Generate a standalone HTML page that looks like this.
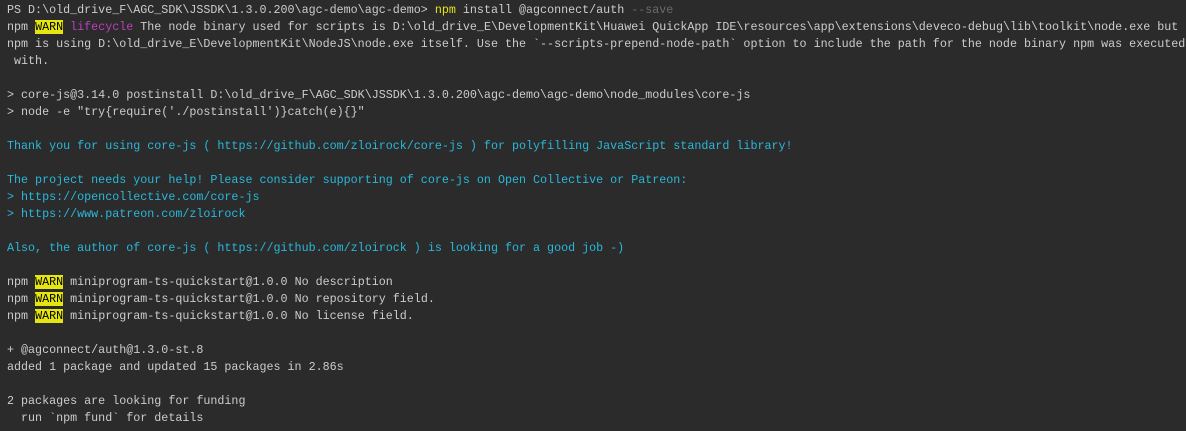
<!DOCTYPE html><html><head><style>
body{margin:0;background:#1e1e1e;}
.t{width:1186px;height:431px;background:#2b2b2b;color:#cccccc;font-family:"Liberation Mono",monospace;font-size:11.7px;line-height:17px;padding:2px 0 0 7px;box-sizing:border-box;white-space:pre;overflow:hidden;}
.c{color:#29b8db}.m{color:#bc3fbc}.y{color:#e5e510}.g{color:#6b6b6b}
.w{background:#e5e510;color:#000}
</style></head><body><div class="t">PS D:\old_drive_F\AGC_SDK\JSSDK\1.3.0.200\agc-demo\agc-demo&gt; <span class="y">npm</span> install @agconnect/auth <span class="g">--save</span>
npm <span class="w">WARN</span> <span class="m">lifecycle</span> The node binary used for scripts is D:\old_drive_E\DevelopmentKit\Huawei QuickApp IDE\resources\app\extensions\deveco-debug\lib\toolkit\node.exe but
npm is using D:\old_drive_E\DevelopmentKit\NodeJS\node.exe itself. Use the `--scripts-prepend-node-path` option to include the path for the node binary npm was executed
 with.

&gt; core-js@3.14.0 postinstall D:\old_drive_F\AGC_SDK\JSSDK\1.3.0.200\agc-demo\agc-demo\node_modules\core-js
&gt; node -e "try{require('./postinstall')}catch(e){}"

<span class="c">Thank you for using core-js ( https://github.com/zloirock/core-js ) for polyfilling JavaScript standard library!</span>

<span class="c">The project needs your help! Please consider supporting of core-js on Open Collective or Patreon:</span>
<span class="c">&gt; https://opencollective.com/core-js</span>
<span class="c">&gt; https://www.patreon.com/zloirock</span>

<span class="c">Also, the author of core-js ( https://github.com/zloirock ) is looking for a good job -)</span>

npm <span class="w">WARN</span> miniprogram-ts-quickstart@1.0.0 No description
npm <span class="w">WARN</span> miniprogram-ts-quickstart@1.0.0 No repository field.
npm <span class="w">WARN</span> miniprogram-ts-quickstart@1.0.0 No license field.

+ @agconnect/auth@1.3.0-st.8
added 1 package and updated 15 packages in 2.86s

2 packages are looking for funding
  run `npm fund` for details
</div></body></html>
